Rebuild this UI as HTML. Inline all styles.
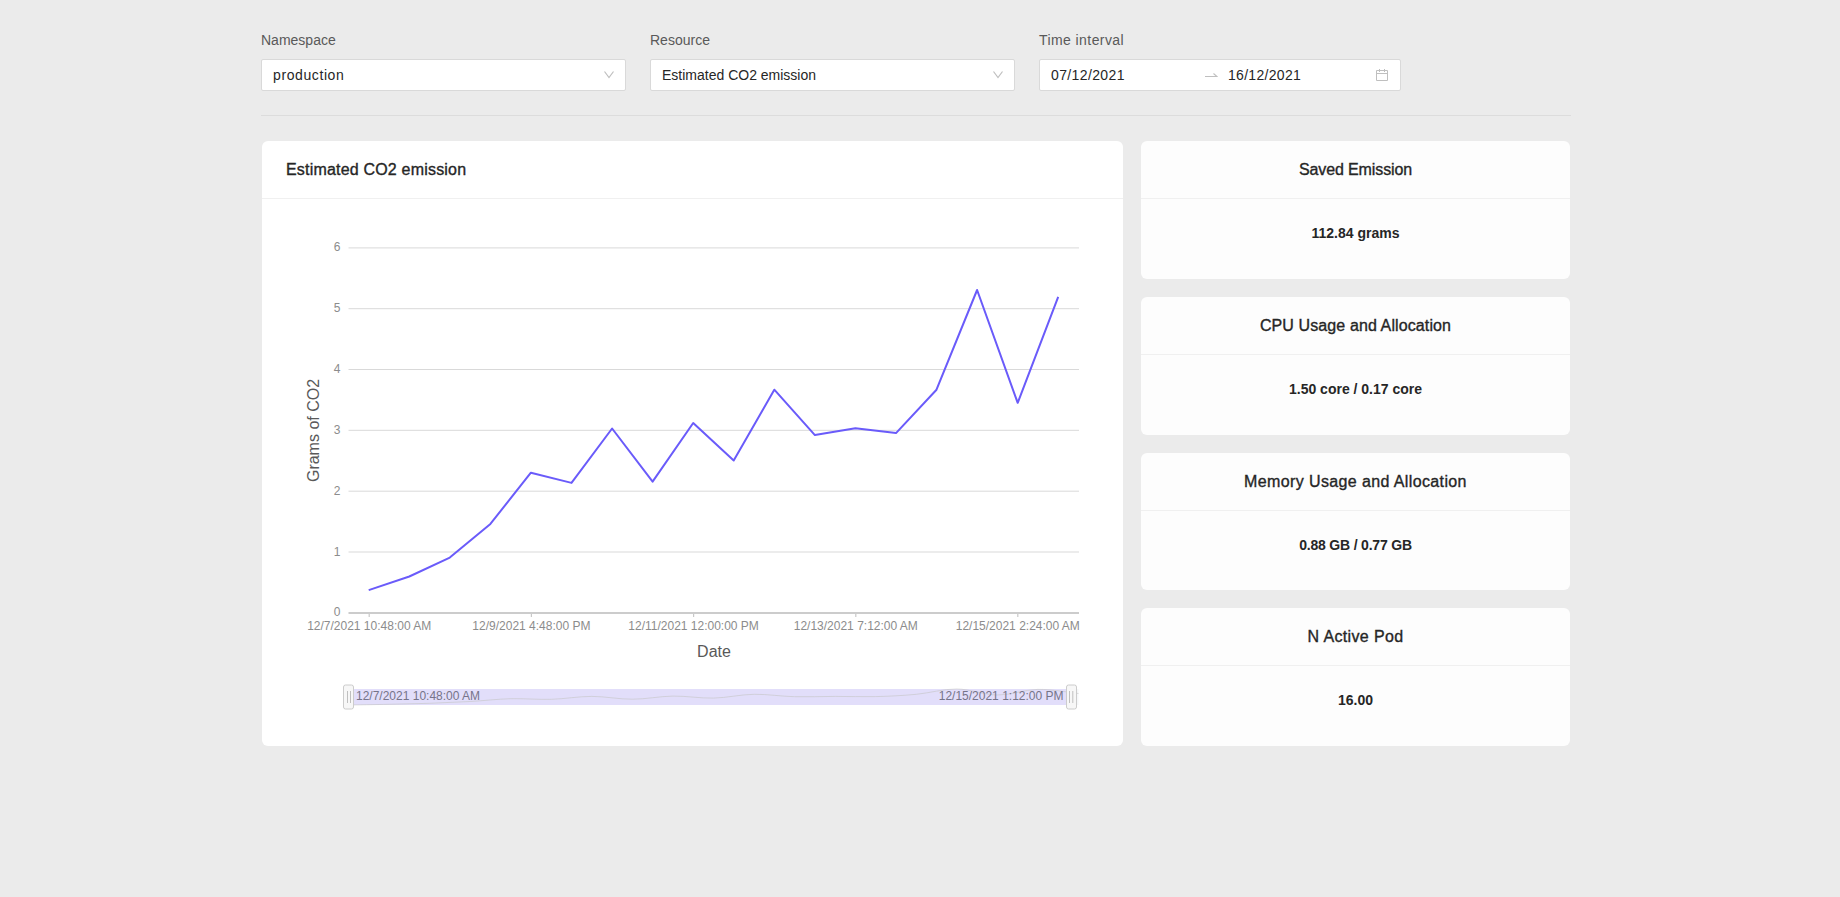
<!DOCTYPE html>
<html>
<head>
<meta charset="utf-8">
<style>
html,body{margin:0;padding:0;}
body{width:1840px;height:897px;background:#ebebeb;position:relative;overflow:hidden;font-family:"Liberation Sans",sans-serif;color:rgba(0,0,0,.85);}
.abs{position:absolute;white-space:nowrap;}
.lbl{font-size:14px;line-height:16px;color:#595959;}
.box{position:absolute;top:59px;height:30px;background:#fff;border:1px solid #d9d9d9;border-radius:2px;}
.val{font-size:14px;line-height:16px;color:#262626;}
.card{position:absolute;background:#fff;border-radius:6px;}
.chead{position:absolute;left:0;right:0;top:0;height:57px;border-bottom:1px solid #f0f0f0;}
.ctitle{font-size:16px;line-height:18px;color:#262626;-webkit-text-stroke:0.35px #262626;}
.rtitle{position:absolute;left:0;right:0;text-align:center;font-size:16px;line-height:18px;color:#262626;-webkit-text-stroke:0.35px #262626;}
.rval{position:absolute;left:0;right:0;text-align:center;font-size:14px;line-height:16px;font-weight:bold;color:#262626;}
</style>
</head>
<body>
<!-- filter labels -->
<div class="abs lbl" style="left:261px;top:32px;">Namespace</div>
<div class="abs lbl" style="left:650px;top:32px;">Resource</div>
<div class="abs lbl" style="left:1039px;top:32px;letter-spacing:0.42px;">Time interval</div>

<div class="box" style="left:261px;width:363px;">
  <div class="abs val" style="left:11px;top:7px;letter-spacing:0.6px;">production</div>
  <svg class="abs" style="left:342px;top:11px;" width="11" height="8" viewBox="0 0 11 8"><path d="M0.5 0.5 L5 6.5 L9.5 0.5" fill="none" stroke="#bfbfbf" stroke-width="1.2"/></svg>
</div>
<div class="box" style="left:650px;width:363px;">
  <div class="abs val" style="left:11px;top:7px;">Estimated CO2 emission</div>
  <svg class="abs" style="left:342px;top:11px;" width="11" height="8" viewBox="0 0 11 8"><path d="M0.5 0.5 L5 6.5 L9.5 0.5" fill="none" stroke="#bfbfbf" stroke-width="1.2"/></svg>
</div>
<div class="box" style="left:1039px;width:360px;">
  <div class="abs val" style="left:11px;top:7px;letter-spacing:0.38px;">07/12/2021</div>
  <svg class="abs" style="left:165px;top:10px;" width="13" height="10" viewBox="0 0 13 10"><path d="M0 6.5 H12 L8.5 3.5" fill="none" stroke="#bfbfbf" stroke-width="1.1"/></svg>
  <div class="abs val" style="left:188px;top:7px;letter-spacing:0.3px;">16/12/2021</div>
  <svg class="abs" style="left:336px;top:9px;" width="13" height="13" viewBox="0 0 13 13"><path d="M0.5 1.5 H11.5 V11.5 H0.5 Z M0.5 4.5 H11.5 M3.5 0 V3 M8.5 0 V3" fill="none" stroke="#bfbfbf" stroke-width="1"/></svg>
</div>

<div class="abs" style="left:261px;top:115px;width:1310px;height:1px;background:#dcdcdc;"></div>

<!-- left chart card -->
<div class="card" style="left:261.5px;top:141px;width:861.5px;height:605px;">
  <div class="chead"></div>
  <div class="abs ctitle" style="left:24.5px;top:20px;letter-spacing:0.19px;">Estimated CO2 emission</div>
</div>

<!-- right cards -->
<div class="card" style="background:#fdfdfd;left:1141px;top:141px;width:429px;height:137.75px;">
  <div class="chead"></div>
  <div class="rtitle" style="top:20px;letter-spacing:-0.12px;">Saved Emission</div>
  <div class="rval" style="top:84px;">112.84 grams</div>
</div>
<div class="card" style="background:#fdfdfd;left:1141px;top:296.75px;width:429px;height:137.75px;">
  <div class="chead"></div>
  <div class="rtitle" style="top:20px;letter-spacing:0.11px;">CPU Usage and Allocation</div>
  <div class="rval" style="top:84px;">1.50 core / 0.17 core</div>
</div>
<div class="card" style="background:#fdfdfd;left:1141px;top:452.5px;width:429px;height:137.75px;">
  <div class="chead"></div>
  <div class="rtitle" style="top:20px;letter-spacing:0.38px;">Memory Usage and Allocation</div>
  <div class="rval" style="top:84px;letter-spacing:-0.19px;">0.88 GB / 0.77 GB</div>
</div>
<div class="card" style="background:#fdfdfd;left:1141px;top:608.25px;width:429px;height:137.75px;">
  <div class="chead"></div>
  <div class="rtitle" style="top:20px;letter-spacing:0.35px;">N Active Pod</div>
  <div class="rval" style="top:84px;">16.00</div>
</div>

<!-- chart -->
<svg class="abs" style="left:0;top:0;" width="1840" height="897" viewBox="0 0 1840 897" font-family="Liberation Sans, sans-serif">
  <g stroke="#d9d9d9" stroke-width="1">
    <line x1="348.5" x2="1079" y1="247.9" y2="247.9"/>
    <line x1="348.5" x2="1079" y1="308.7" y2="308.7"/>
    <line x1="348.5" x2="1079" y1="369.5" y2="369.5"/>
    <line x1="348.5" x2="1079" y1="430.3" y2="430.3"/>
    <line x1="348.5" x2="1079" y1="491.2" y2="491.2"/>
    <line x1="348.5" x2="1079" y1="552.0" y2="552.0"/>
  </g>
  <line x1="348.5" x2="1079" y1="613" y2="613" stroke="#cccccc" stroke-width="2"/>
  <g stroke="#c8c8c8" stroke-width="1.2">
    <line x1="369.2" x2="369.2" y1="614" y2="617"/>
    <line x1="531.4" x2="531.4" y1="614" y2="617"/>
    <line x1="693.6" x2="693.6" y1="614" y2="617"/>
    <line x1="855.8" x2="855.8" y1="614" y2="617"/>
    <line x1="1017.8" x2="1017.8" y1="614" y2="617"/>
  </g>
  <g font-size="12" fill="#8c8c8c" text-anchor="end">
    <text x="340.5" y="250.9">6</text>
    <text x="340.5" y="311.7">5</text>
    <text x="340.5" y="372.5">4</text>
    <text x="340.5" y="434.1">3</text>
    <text x="340.5" y="495.0">2</text>
    <text x="340.5" y="555.7">1</text>
    <text x="340.5" y="616.2">0</text>
  </g>
  <g font-size="12" fill="#8c8c8c" text-anchor="middle">
    <text x="369.2" y="630">12/7/2021 10:48:00 AM</text>
    <text x="531.4" y="630">12/9/2021 4:48:00 PM</text>
    <text x="693.6" y="630">12/11/2021 12:00:00 PM</text>
    <text x="855.8" y="630">12/13/2021 7:12:00 AM</text>
    <text x="1017.8" y="630">12/15/2021 2:24:00 AM</text>
  </g>
  <text x="714" y="657" font-size="16" fill="#595959" text-anchor="middle">Date</text>
  <text transform="translate(319,430.5) rotate(-90)" font-size="16" fill="#595959" text-anchor="middle">Grams of CO2</text>
  <polyline fill="none" stroke="#6a5bfa" stroke-width="2" stroke-linejoin="round" points="368.7,590.1 409.3,576.5 449.8,557.6 490.4,523.9 530.9,472.7 571.5,482.9 612.1,428.5 652.6,481.6 693.2,423.0 733.7,460.5 774.3,389.7 814.9,435.1 855.4,428.2 896.0,433.1 936.5,389.7 977.1,290.0 1017.7,402.8 1058.2,296.9"/>

  <!-- slider -->
  <rect x="348.5" y="689" width="730" height="16" fill="#416180" fill-opacity="0.05"/>
  <rect x="348.5" y="689" width="723" height="16" fill="#e2defa"/>
  <path fill="none" stroke="#c5c5c5" stroke-opacity="0.6" stroke-width="1" d="M348.5 705.0 C355.3 704.9 375.5 704.6 389.1 704.3 C402.6 704.0 416.1 703.7 429.6 703.3 C443.1 702.8 456.6 702.2 470.2 701.5 C483.7 700.7 497.2 699.1 510.7 698.7 C524.2 698.4 537.8 699.7 551.3 699.3 C564.8 698.9 578.3 696.4 591.8 696.4 C605.4 696.4 618.9 699.3 632.4 699.2 C645.9 699.2 659.4 696.3 672.9 696.1 C686.5 695.9 700.0 698.4 713.5 698.1 C727.0 697.8 740.5 694.5 754.1 694.3 C767.6 694.1 781.1 696.4 794.6 696.7 C808.1 697.1 821.6 696.4 835.2 696.4 C848.7 696.3 862.2 697.0 875.7 696.6 C889.2 696.3 902.8 695.6 916.3 694.3 C929.8 693.0 943.3 688.9 956.8 689.0 C970.4 689.1 983.9 695.0 997.4 695.0 C1010.9 695.1 1024.4 689.6 1037.9 689.4 C1051.5 689.1 1071.7 692.9 1078.5 693.5"/>
  <g font-size="12" fill="#767489">
    <text x="356" y="700">12/7/2021 10:48:00 AM</text>
    <text x="1063.5" y="700" text-anchor="end">12/15/2021 1:12:00 PM</text>
  </g>
  <g>
    <rect x="343.5" y="685" width="10" height="24" rx="2" fill="#f7f7f7" stroke="#cccccc" stroke-width="1"/>
    <line x1="347.5" x2="347.5" y1="691" y2="703" stroke="#bfbfbf" stroke-width="1"/>
    <line x1="350.5" x2="350.5" y1="691" y2="703" stroke="#bfbfbf" stroke-width="1"/>
    <rect x="1066.5" y="685" width="10" height="24" rx="2" fill="#f7f7f7" stroke="#cccccc" stroke-width="1"/>
    <line x1="1069.5" x2="1069.5" y1="691" y2="703" stroke="#bfbfbf" stroke-width="1"/>
    <line x1="1072.8" x2="1072.8" y1="691" y2="703" stroke="#bfbfbf" stroke-width="1"/>
  </g>
</svg>
</body>
</html>
